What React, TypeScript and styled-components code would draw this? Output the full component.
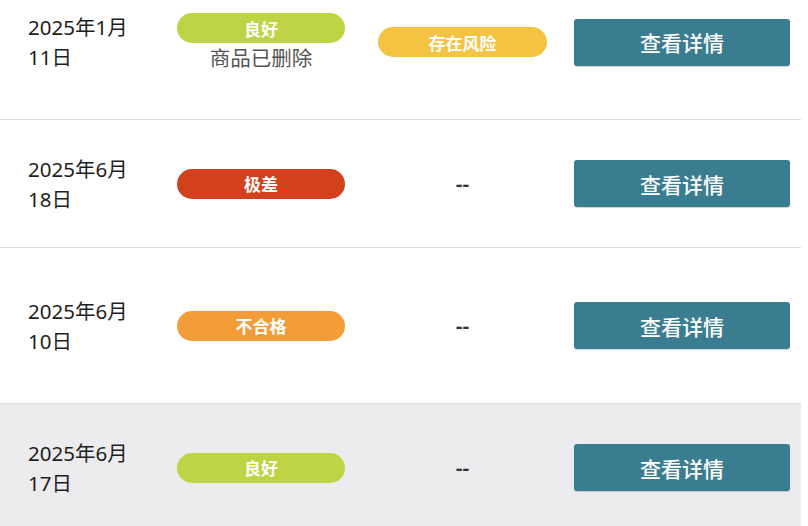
import React from "react";
import styled, { createGlobalStyle } from "styled-components";

const Global = createGlobalStyle`
  html, body { margin: 0; padding: 0; background: #ffffff; }
  body {
    font-family: "Noto Sans", "Noto Sans CJK SC", sans-serif;
    overflow: hidden;
  }
`;

const Viewport = styled.div`
  width: 808px;
  height: 526px;
  overflow: hidden;
  background: #ffffff;
`;

const Table = styled.div`
  width: 801px;
  margin-top: -35px;
  display: flex;
  flex-direction: column;
`;

const Row = styled.div<{ $h: number; $shaded?: boolean }>`
  height: ${(p) => p.$h}px;
  box-sizing: border-box;
  display: grid;
  grid-template-columns: 149px 168px 229px 216px;
  align-items: center;
  padding-left: 28px;
  border-bottom: 1px solid #dcdcdc;
  background: ${(p) => (p.$shaded ? "#ececee" : "#ffffff")};
`;

const DateCell = styled.div`
  font-size: 20.5px;
  line-height: 30px;
  color: #1e1e1e;
  font-family: "Noto Sans", "Noto Sans CJK SC", sans-serif;
`;

const StatusCell = styled.div`
  display: flex;
  flex-direction: column;
  align-items: center;
`;

const Badge = styled.div<{ $bg: string; $w?: number }>`
  width: ${(p) => p.$w ?? 168}px;
  height: 30px;
  border-radius: 15px;
  background: ${(p) => p.$bg};
  color: #ffffff;
  font-family: "Noto Sans CJK SC", sans-serif;
  font-weight: 700;
  font-size: 17px;
  display: flex;
  align-items: center;
  justify-content: center;
  box-sizing: border-box;
`;

const Note = styled.div`
  font-family: "Noto Sans CJK SC", sans-serif;
  font-size: 20.5px;
  line-height: 28px;
  color: #555555;
`;

const RiskCell = styled.div`
  display: flex;
  justify-content: center;
  padding-left: 6px;
`;

const Dash = styled.span`
  font-size: 21px;
  font-weight: 600;
  color: #333333;
  font-family: "Noto Sans", sans-serif;
`;

const DetailButton = styled.button`
  width: 216px;
  height: 47px;
  border: none;
  border-radius: 3px;
  background: #3b7d90;
  box-shadow: 0 1px 1px rgba(0, 0, 0, 0.18);
  color: #ffffff;
  font-family: "Noto Sans CJK SC", sans-serif;
  font-weight: 500;
  font-size: 21px;
  display: flex;
  align-items: center;
  justify-content: center;
  padding: 0;
  cursor: pointer;
`;

const COLORS: Record<string, string> = {
  良好: "#bfd444",
  极差: "#d2401e",
  不合格: "#f29d37",
  存在风险: "#f5c342",
};

type Item = {
  date: [string, string];
  status: string;
  note?: string;
  risk?: string;
  h: number;
  shaded?: boolean;
};

const items: Item[] = [
  { date: ["2025年1月", "11日"], status: "良好", note: "商品已删除", risk: "存在风险", h: 155 },
  { date: ["2025年6月", "18日"], status: "极差", h: 128 },
  { date: ["2025年6月", "10日"], status: "不合格", h: 156 },
  { date: ["2025年6月", "17日"], status: "良好", h: 128, shaded: true },
];

export default function App() {
  return (
    <Viewport>
      <Global />
      <Table>
        {items.map((it, i) => (
          <Row key={i} $h={it.h} $shaded={it.shaded}>
            <DateCell>
              {it.date[0]}
              <br />
              {it.date[1]}
            </DateCell>
            <StatusCell>
              <Badge $bg={COLORS[it.status]}>{it.status}</Badge>
              {it.note && <Note>{it.note}</Note>}
            </StatusCell>
            <RiskCell>
              {it.risk ? (
                <Badge $bg={COLORS[it.risk]} $w={169}>
                  {it.risk}
                </Badge>
              ) : (
                <Dash>--</Dash>
              )}
            </RiskCell>
            <DetailButton>查看详情</DetailButton>
          </Row>
        ))}
      </Table>
    </Viewport>
  );
}
